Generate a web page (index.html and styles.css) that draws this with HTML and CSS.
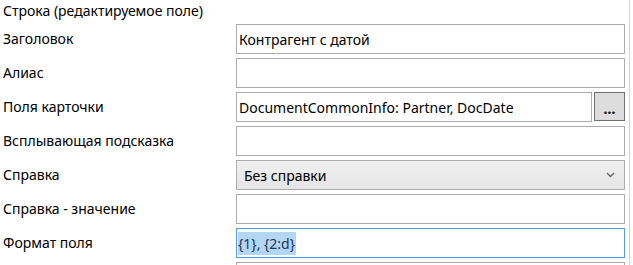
FILE: index.html
```html
<!DOCTYPE html>
<html lang="ru">
<head>
<meta charset="UTF-8">
<title>Строка (редактируемое поле)</title>
<link rel="stylesheet" href="styles.css">
</head>
<body>
<div class="panel">
	<div class="caption">Строка (редактируемое поле)</div>
	<div class="props">
		<label class="lbl">Заголовок</label>
		<div class="box">Контрагент с датой</div>

		<label class="lbl">Алиас</label>
		<div class="box"></div>

		<label class="lbl">Поля карточки</label>
		<div class="pick">
			<div class="box">DocumentCommonInfo: Partner, DocDate</div>
			<span class="dots">...</span>
		</div>

		<label class="lbl">Всплывающая подсказка</label>
		<div class="box"></div>

		<label class="lbl">Справка</label>
		<div class="combo">
			<span>Без справки</span>
			<svg class="chev" width="9" height="6" viewBox="0 0 9 6"><path d="M1 1 L4.5 4.5 L8 1" fill="none" stroke="#666" stroke-width="1.4"/></svg>
		</div>

		<label class="lbl">Справка - значение</label>
		<div class="box"></div>

		<label class="lbl">Формат поля</label>
		<div class="box focus"><span class="sel">{1}, {2:d}</span></div>

		<label class="lbl"></label>
		<div class="box"></div>
	</div>
</div>
</body>
</html>
```

FILE: styles.css
```css
html,body{margin:0;padding:0;background:#fff;}
body{font-family:"Noto Sans","Open Sans",sans-serif;font-size:14px;color:#000;width:633px;height:265px;overflow:hidden;}
.panel{width:630px;height:265px;border-right:1px solid #d4d4d4;box-sizing:border-box;padding-left:3px;overflow:hidden;}
.caption{height:24px;line-height:22px;}
.props{display:grid;grid-template-columns:233px 389px;grid-auto-rows:30px;row-gap:4px;}
.lbl{display:flex;align-items:center;padding-bottom:1px;}
.box{border:1px solid #acacac;box-sizing:border-box;height:30px;display:flex;align-items:center;padding-left:2px;white-space:nowrap;overflow:hidden;}
.pick{display:flex;gap:2px;}
.pick .box{flex:1;}
.dots{width:31px;height:29px;box-sizing:border-box;border:1px solid #707070;background:#dddddd;display:flex;justify-content:center;align-items:flex-end;padding-bottom:6px;font-size:14px;font-weight:bold;line-height:10px;}
.combo{border:1px solid #acacac;box-sizing:border-box;height:30px;background:linear-gradient(#f0f0f0,#e5e5e5);display:flex;align-items:center;justify-content:space-between;padding:0 9px 0 7px;}
.focus{border-color:#569de5;padding-left:1px;}
.sel{background:#b3d7f3;color:#1c3557;line-height:23px;padding-right:1px;}
```
